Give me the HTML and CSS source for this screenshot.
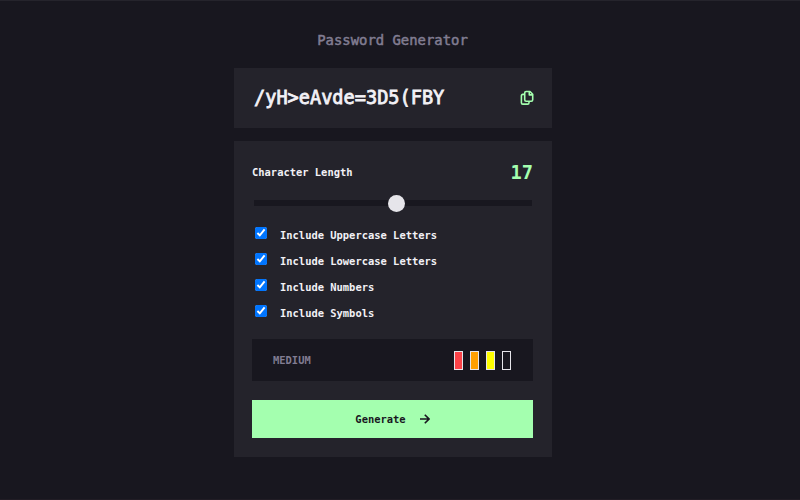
FILE: index.html
```html
<!DOCTYPE html>
<html lang="en">
<head>
<meta charset="utf-8">
<title>Password Generator</title>
<link rel="stylesheet" href="styles.css">
</head>
<body>
<main class="generator">
  <h1 class="title">Password Generator</h1>
  <section class="display">
    <span class="password">/yH&gt;eAvde=3D5(FBY</span>
    <button class="copy" aria-label="Copy">
      <svg width="14" height="16" viewBox="0 0 14 16" fill="none" stroke="currentColor" stroke-width="1.6" stroke-linejoin="round">
        <path d="M6.1 1.5H10L12.7 4.2V9.8Q12.7 11.2 11.3 11.2H6.1Q4.7 11.2 4.7 9.8V2.9Q4.7 1.5 6.1 1.5Z"/>
        <path d="M9.3 1.5V4.9H12.7M4.7 4.4H2.8Q1.4 4.4 1.4 5.8V12.7Q1.4 14.1 2.8 14.1H7.6Q9 14.1 9 12.7V11.2"/>
      </svg>
    </button>
  </section>
  <section class="panel">
    <div class="length"><span>Character Length</span><span class="count">17</span></div>
    <div class="slider"><span class="thumb"></span></div>
    <div class="options">
      <label class="option"><input type="checkbox" checked><span>Include Uppercase Letters</span></label>
      <label class="option"><input type="checkbox" checked><span>Include Lowercase Letters</span></label>
      <label class="option"><input type="checkbox" checked><span>Include Numbers</span></label>
      <label class="option"><input type="checkbox" checked><span>Include Symbols</span></label>
    </div>
    <div class="strength">
      <span>MEDIUM</span>
      <div class="bars"><i class="bar red"></i><i class="bar orange"></i><i class="bar yellow"></i><i class="bar"></i></div>
    </div>
    <button class="generate"><span>Generate</span>
      <svg width="10" height="10" viewBox="0 0 10 10" fill="none" stroke="currentColor" stroke-width="1.6"><path d="M0 5H8.6M4.8 .8L9 5L4.8 9.2"/></svg>
    </button>
  </section>
</main>
</body>
</html>
```
FILE: styles.css
```css
* { box-sizing: border-box; }
body {
  margin: 0;
  height: 500px;
  overflow: hidden;
  background: #18171f;
  border-top: 1px solid #25242c;
  border-bottom: 1px solid #211d25;
  color: #f2f1f6;
  font: bold 10.45px/14px "DejaVu Sans Mono", monospace;
}
button { border: 0; padding: 0; font: inherit; }
svg { display: block; }
.generator { width: 318px; margin-left: 234px; padding-top: 29px; }
.title {
  margin: 0 0 17.5px;
  padding-right: 1px;
  text-align: center;
  color: #817d92;
  font-size: 13.9px;
  line-height: 20px;
  font-weight: normal;
  -webkit-text-stroke: .5px;
}
.display {
  display: flex;
  align-items: center;
  justify-content: space-between;
  height: 60px;
  margin-bottom: 13.5px;
  padding: 1px 18px 0 20px;
  background: #24232b;
}
.password { font-size: 18.6px; line-height: 24px; font-weight: normal; -webkit-text-stroke: .8px; }
.copy { background: none; color: #a4ffaf; }
.panel { height: 315.5px; padding: 18px 19px 0 18px; background: #24232b; }
.length { display: flex; align-items: center; justify-content: space-between; height: 26px; }
.count { padding-top: 1px; color: #a4ffaf; font-size: 18.7px; line-height: 24px; }
.slider {
  display: flex;
  align-items: center;
  justify-content: center;
  height: 6px;
  margin: 15px 1px 0 2px;
  padding-left: 7px;
  background: #18171f;
}
.thumb { flex: none; width: 17px; height: 17px; border-radius: 50%; background: #e6e5ea; }
.options { margin-top: 16px; }
.option { display: flex; align-items: center; height: 26.1px; }
.option input { width: 12px; height: 12px; margin: 0 13px 4px 3px; accent-color: #0075ff; }
.strength {
  display: flex;
  align-items: center;
  justify-content: space-between;
  height: 42px;
  margin-top: 13px;
  padding: 0 22px 0 21px;
  background: #18171f;
  color: #817d92;
}
.bars { display: flex; gap: 7px; }
.bar { width: 9px; height: 19px; border: 1px solid #e6e5ea; }
.red { background: #fb4348; }
.orange { background: #ff9f00; }
.yellow { background: #ffff00; }
.generate {
  display: flex;
  align-items: center;
  justify-content: center;
  gap: 14px;
  width: 100%;
  height: 38px;
  margin-top: 19px;
  background: #a4ffaf;
  color: #18171f;
}
```
